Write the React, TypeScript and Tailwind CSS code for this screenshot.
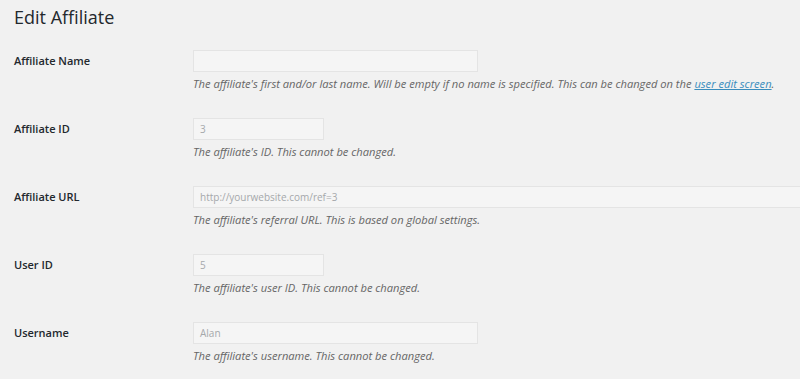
import React from "react";

type Row = {
  label: string;
  value: string;
  width: string;
  desc: React.ReactNode;
};

const rows: Row[] = [
  {
    label: "Affiliate Name",
    value: "",
    width: "w-[285px]",
    desc: (
      <>
        The affiliate's first and/or last name. Will be empty if no name is specified. This can be changed on the{" "}
        <a href="#" className="text-[#3a8dbd] underline">user edit screen</a>.
      </>
    ),
  },
  { label: "Affiliate ID", value: "3", width: "w-[131px]", desc: "The affiliate's ID. This cannot be changed." },
  {
    label: "Affiliate URL",
    value: "http://yourwebsite.com/ref=3",
    width: "w-[620px]",
    desc: "The affiliate's referral URL. This is based on global settings.",
  },
  { label: "User ID", value: "5", width: "w-[131px]", desc: "The affiliate's user ID. This cannot be changed." },
  { label: "Username", value: "Alan", width: "w-[285px]", desc: "The affiliate's username. This cannot be changed." },
];

export default function App() {
  return (
    <div
      className="w-[800px] h-[379px] overflow-hidden bg-[#f1f1f1] pl-[14px] text-[#23282d]"
      style={{ fontFamily: '"Open Sans", "Noto Sans", sans-serif' }}
    >
      <h1 className="mt-[3px] h-[28px] text-[18px] leading-[28px] font-normal text-[#23282d]">Edit Affiliate</h1>
      <div className="mt-[19px] flex flex-col">
        {rows.map((r) => (
          <div key={r.label} className="flex h-[68px]">
            <div className="w-[179px] shrink-0 h-[23px] flex items-center text-[11px] font-semibold text-[#23282d]">
              {r.label}
            </div>
            <div className="flex flex-col min-w-0">
              <div
                className={`${r.width} h-[22px] shrink-0 border border-[#e4e4e4] bg-[#f5f5f5] pl-[6px] flex items-center text-[10px] text-[#a5a8ab] whitespace-nowrap overflow-hidden`}
              >
                {r.value}
              </div>
              <p className="mt-[4px] text-[11.15px] leading-[16px] italic text-[#666] whitespace-nowrap">{r.desc}</p>
            </div>
          </div>
        ))}
      </div>
    </div>
  );
}
